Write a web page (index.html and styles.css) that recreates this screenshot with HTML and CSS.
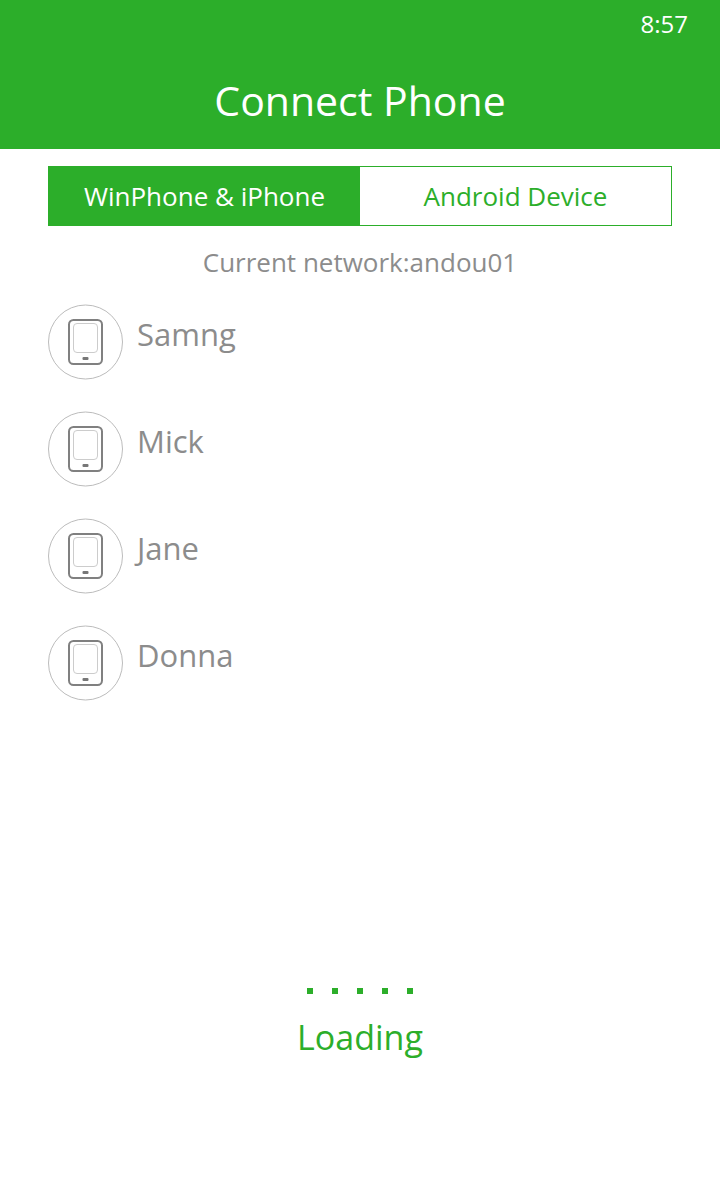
FILE: index.html
```html
<!DOCTYPE html>
<html lang="en">
<head>
<meta charset="utf-8">
<meta name="viewport" content="width=device-width, initial-scale=1">
<title>Connect Phone</title>
<link rel="stylesheet" href="styles.css">
</head>
<body>
<svg class="sprite" aria-hidden="true">
  <symbol id="phone" viewBox="0 0 76 76">
    <circle cx="38.500" cy="38" r="37" fill="#fff" stroke="#bcbcbc" stroke-width="1"/>
    <rect x="22" y="16" width="33" height="44" rx="4.500" fill="none" stroke="#808080" stroke-width="2"/>
    <rect x="26.500" y="19.500" width="24" height="29" rx="3.500" fill="none" stroke="#ccc" stroke-width="1"/>
    <rect x="35.500" y="53" width="6" height="3" rx="1" fill="#777"/>
  </symbol>
</svg>
<header class="header">
  <time class="clock">8:57</time>
  <h1 class="title">Connect Phone</h1>
</header>
<main class="main">
  <div class="tabs" role="tablist">
    <button class="tab tab-active" type="button" role="tab" aria-selected="true">WinPhone &amp; iPhone</button>
    <button class="tab" type="button" role="tab" aria-selected="false">Android Device</button>
  </div>
  <p class="network">Current network:andou01</p>
  <ul class="devices">
    <li class="device"><svg class="icon" aria-hidden="true"><use href="#phone"/></svg><span class="name">Samng</span></li>
    <li class="device"><svg class="icon" aria-hidden="true"><use href="#phone"/></svg><span class="name">Mick</span></li>
    <li class="device"><svg class="icon" aria-hidden="true"><use href="#phone"/></svg><span class="name">Jane</span></li>
    <li class="device"><svg class="icon" aria-hidden="true"><use href="#phone"/></svg><span class="name">Donna</span></li>
  </ul>
</main>
<footer class="loading" role="status">
  <div class="dots"><i class="dot"></i><i class="dot"></i><i class="dot"></i><i class="dot"></i><i class="dot"></i></div>
  <p class="loading-text">Loading</p>
</footer>
</body>
</html>
```
FILE: styles.css
```css
* { box-sizing: border-box; }
body {
  margin: 0;
  min-height: 100vh;
  display: flex;
  flex-direction: column;
  background: #fff;
  color: #8c8c8c;
  font-family: "Open Sans", "Noto Sans", sans-serif;
}
h1, p, ul { margin: 0; padding: 0; font-weight: 400; }
.sprite { position: absolute; width: 0; height: 0; }
.header { background: #2cae2a; color: #fff; padding: 8px 32px 21px; }
.clock { display: block; text-align: right; font-size: 24px; line-height: 32px; }
.title { text-align: center; font-size: 41px; line-height: 56px; padding-top: 32px; }
.main { padding: 17px 48px 0; }
.tabs { display: flex; border: 1px solid #2cae2a; }
.tab {
  flex: 1;
  height: 58px;
  border: 0;
  padding: 0;
  background: #fff;
  color: #2cae2a;
  font: inherit;
  font-size: 26px;
}
.tab-active { background: #2cae2a; color: #fff; }
.network { text-align: center; font-size: 26px; line-height: 36px; padding-top: 18px; }
.devices { list-style: none; padding-top: 24px; display: grid; gap: 31px; }
.device { display: flex; gap: 14px; }
.icon { width: 76px; height: 76px; margin-left: -1px; flex: none; }
.name { font-size: 31px; line-height: 44px; padding-top: 8px; }
.loading { margin-top: auto; padding-bottom: 138px; color: #2cae2a; display: flex; flex-direction: column; align-items: center; gap: 18px; }
.dots { display: flex; gap: 19px; }
.dot { width: 6px; height: 6px; background: #2cae2a; }
.loading-text { font-size: 34px; line-height: 50px; }
```
